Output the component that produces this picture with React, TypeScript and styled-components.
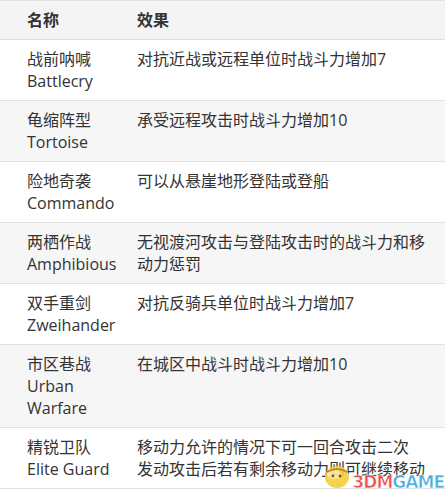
import React from "react";
import styled, { createGlobalStyle } from "styled-components";

const GlobalStyle = createGlobalStyle`
  html, body {
    margin: 0;
    padding: 0;
    background: #ffffff;
  }
  body {
    font-family: "Open Sans", "Noto Sans CJK SC", sans-serif;
    color: #333333;
  }
`;

type Ability = {
  zh: string;
  en: string[];
  effect: string[];
};

const abilities: Ability[] = [
  { zh: "战前呐喊", en: ["Battlecry"], effect: ["对抗近战或远程单位时战斗力增加7"] },
  { zh: "龟缩阵型", en: ["Tortoise"], effect: ["承受远程攻击时战斗力增加10"] },
  { zh: "险地奇袭", en: ["Commando"], effect: ["可以从悬崖地形登陆或登船"] },
  {
    zh: "两栖作战",
    en: ["Amphibious"],
    effect: ["无视渡河攻击与登陆攻击时的战斗力和移", "动力惩罚"],
  },
  { zh: "双手重剑", en: ["Zweihander"], effect: ["对抗反骑兵单位时战斗力增加7"] },
  { zh: "市区巷战", en: ["Urban", "Warfare"], effect: ["在城区中战斗时战斗力增加10"] },
  {
    zh: "精锐卫队",
    en: ["Elite Guard"],
    effect: ["移动力允许的情况下可一回合攻击二次", "发动攻击后若有剩余移动力则可继续移动"],
  },
];

export default function App() {
  return (
    <Page>
      <GlobalStyle />
      <Table>
        <colgroup>
          <col style={{ width: 137 }} />
          <col />
        </colgroup>
        <thead>
          <HeadRow>
            <HeadCell $first>名称</HeadCell>
            <HeadCell>效果</HeadCell>
          </HeadRow>
        </thead>
        <tbody>
          {abilities.map((a, i) => (
            <Row key={a.zh} $shaded={i % 2 === 1}>
              <Cell $first>
                <Line>{a.zh}</Line>
                {a.en.map((l) => (
                  <Line key={l}>{l}</Line>
                ))}
              </Cell>
              <Cell>
                {a.effect.map((l) => (
                  <Line key={l}>{l}</Line>
                ))}
              </Cell>
            </Row>
          ))}
        </tbody>
      </Table>
      <Watermark>
        <Mascot viewBox="0 0 28 26" aria-hidden="true">
          <ellipse cx="14" cy="14" rx="12" ry="11" fill="#f5cf3c" />
          <ellipse cx="11" cy="11" rx="7" ry="5" fill="#fbe98a" />
          <path d="M4 9 Q14 3 24 9" stroke="#b07a2a" strokeWidth="1.6" fill="none" />
          <circle cx="10" cy="13" r="1.4" fill="#6b4a1a" />
          <circle cx="17" cy="13" r="1.4" fill="#6b4a1a" />
        </Mascot>
        <Brand>
          <Red>3DM</Red>
          <Blue>GAME</Blue>
        </Brand>
      </Watermark>
    </Page>
  );
}

const Page = styled.div`
  position: relative;
  width: 448px;
  height: 498px;
  overflow: hidden;
  background: #ffffff;
`;

const Table = styled.table`
  width: 445px;
  table-layout: fixed;
  border-collapse: collapse;
  font-size: 16px;
  line-height: 22px;
`;

const HeadRow = styled.tr`
  background: #f4f4f4;
  border-top: 1px solid #e3e3e3;
  border-bottom: 1px solid #dedede;
`;

const HeadCell = styled.th<{ $first?: boolean }>`
  text-align: left;
  font-weight: 700;
  padding: 8px 0 8px ${(p) => (p.$first ? "27px" : "0")};
  color: #333333;
`;

const Row = styled.tr<{ $shaded: boolean }>`
  background: ${(p) => (p.$shaded ? "#f6f6f6" : "#ffffff")};
  border-bottom: 1px solid #e0e0e0;
`;

const Cell = styled.td<{ $first?: boolean }>`
  vertical-align: top;
  padding: 8px ${(p) => (p.$first ? "0" : "16px")} 8px ${(p) => (p.$first ? "27px" : "0")};
  color: #333333;
`;

const Line = styled.div`
  white-space: nowrap;
`;

const Watermark = styled.div`
  position: absolute;
  right: 4px;
  bottom: 7px;
  display: flex;
  align-items: flex-end;
  pointer-events: none;
`;

const Mascot = styled.svg`
  width: 28px;
  height: 26px;
  opacity: 0.9;
  margin: 0 2px 2px 0;
`;

const Brand = styled.div`
  font-family: "DejaVu Sans", sans-serif;
  font-weight: 700;
  font-size: 17px;
  letter-spacing: -1px;
  line-height: 18px;
  -webkit-text-stroke: 0.6px #ffffff;
  opacity: 0.9;
`;

const Red = styled.span`
  color: #e8413a;
`;

const Blue = styled.span`
  color: #3aa6d8;
`;
